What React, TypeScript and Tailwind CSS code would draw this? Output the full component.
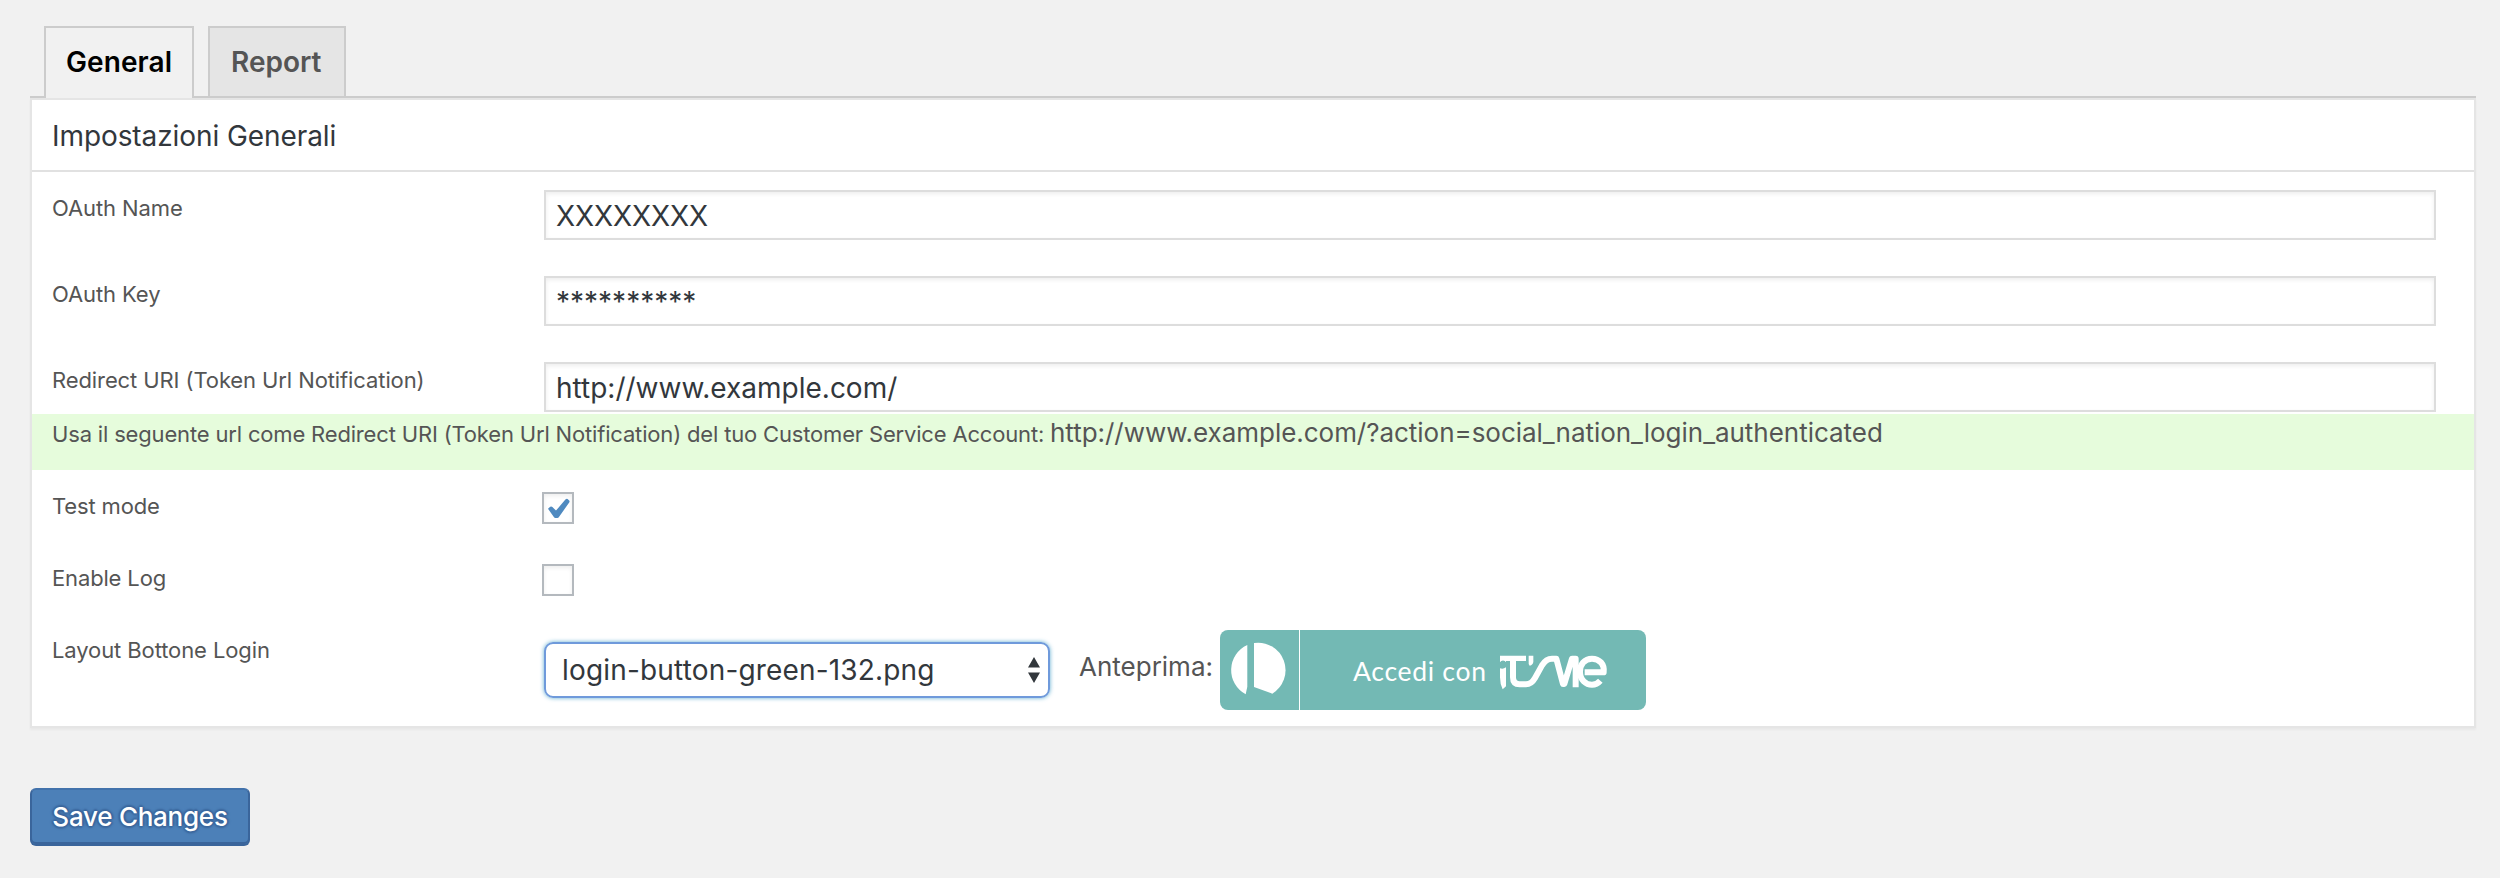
import React from "react";

const INSET = "shadow-[inset_0_2px_4px_rgba(0,0,0,0.07)]";

function Field({ label, value, valueClass }: { label: string; value: string; valueClass: string }) {
  return (
    <div className="flex h-[86px] pt-[18px] pl-[20px]">
      <div className="w-[492px] shrink-0 pt-[3px] text-[22px] leading-[30px]">
        <span className="whitespace-nowrap tracking-[-0.1px]">{label}</span>
      </div>
      <div className={`h-[50px] w-[1892px] border-2 border-[#ddd] bg-white pl-[10px] text-[28px] text-[#32373c] ${INSET}`}>
        <span className={`block whitespace-nowrap leading-[48px] ${valueClass}`}>{value}</span>
      </div>
    </div>
  );
}

function CheckRow({ label, checked }: { label: string; checked?: boolean }) {
  return (
    <div className="flex h-[72px] pt-[20px] pl-[20px]">
      <div className="w-[490px] shrink-0 pt-px text-[22px] leading-[30px]">
        <span className="tracking-[-0.15px]">{label}</span>
      </div>
      <div className={`mt-[2px] h-8 w-8 border-2 border-[#b4b9be] bg-white ${INSET}`}>
        {checked && (
          <svg className="block" width="28" height="28" viewBox="0 0 28 28" fill="#4f8ac0">
            <path d="M4 14.8 6.2 12.8Q7.4 12 8.4 13L12 16.6 21.4 5.6Q22.6 4.4 23.6 5L25.4 6.8Q25.8 7.6 25.2 8.6L14.6 23.4Q12.4 24.8 10.2 23.4Z" />
          </svg>
        )}
      </div>
    </div>
  );
}

function LoginButton() {
  return (
    <div className="mt-[16px] ml-[8px] flex h-[80px] w-[426px] overflow-hidden rounded-[8px] bg-[#73b9b4]">
      <div className="h-[80px] w-[80px] shrink-0 border-r border-white">
        <svg className="block" width="79" height="80" viewBox="0 0 79 80" fill="#fff">
          <path d="M27.3 15V56.7L25.7 64.3A27.5 27.5 0 0 1 27.3 15Z" />
          <path d="M34 13A27.5 27.5 0 0 1 52.3 63.7L34 56.9Z" />
        </svg>
      </div>
      <div className="flex items-start">
        <span className="ml-[53px] mt-[25px] w-[146px] whitespace-nowrap font-[Lato] text-[26.5px] leading-[32px] tracking-[0.7px] text-white">
          Accedi con
        </span>
        <svg className="mt-[24px]" width="110" height="36" viewBox="57 42 330 108" fill="none" stroke="#fff" strokeWidth="18">
          <path d="M60 47H138V63H78V67A10 10 0 0 0 60 67Z" fill="#fff" stroke="none" />
          <path d="M60 85Q69 89 78 82V139L68 148Q60 132 60 112Z" fill="#fff" stroke="none" />
          <path d="M146 47H160V65Q159 74 149 77L146 72Z" fill="#fff" stroke="none" />
          <path d="M99 56V112Q99 133 119 133H138Q154 133 165 114L186 76Q198 56 216 56H229L249 132H253L276 56H287V142" strokeLinejoin="round" />
          <path d="M314 97H371C374 72 358 56 336 56C313 56 300 74 300 95C300 120 318 134 336 134C346 134 354 130 361 122" strokeLinejoin="round" />
        </svg>
      </div>
    </div>
  );
}

export default function App() {
  return (
    <div className="h-[878px] w-[2500px] overflow-hidden bg-[#f1f1f1] pt-[26px] pl-[30px] font-[Inter,sans-serif] text-[#555]">
      <div className="flex h-[72px] w-[2446px] items-start gap-[14px] border-b-2 border-[#ccc] pl-[14px] text-[28px] font-semibold leading-[40px]">
        <div className="h-[72px] w-[150px] border-2 border-b-0 border-[#ccc] bg-[#f1f1f1] pt-[14px] pl-[20px] text-black">
          <span className="tracking-[0.1px]">General</span>
        </div>
        <div className="h-[70px] w-[138px] border-2 border-b-0 border-[#ccc] bg-[#e5e5e5] pt-[14px] pl-[21px]">
          <span>Report</span>
        </div>
      </div>

      <div className="h-[630px] w-[2446px] border-2 border-[#e5e5e5] bg-white shadow-[0_2px_2px_rgba(0,0,0,0.04)]">
        <div className="h-[72px] border-b-2 border-[#e1e1e1] pt-[16px] pl-[20px] text-[28px] leading-[40px] text-[#32373c]">
          <span className="tracking-[-0.08px]">Impostazioni Generali</span>
        </div>
        <Field label="OAuth Name" value="XXXXXXXX" valueClass="tracking-[-0.1px]" />
        <Field label="OAuth Key" value="**********" valueClass="" />
        <div className="h-[70px]">
          <Field label="Redirect URI (Token Url Notification)" value="http://www.example.com/" valueClass="" />
        </div>
        <div className="flex h-[56px] items-baseline bg-[#e6fcdc] pl-[20px] leading-[38px]">
          <span className="w-[993px] shrink-0 whitespace-nowrap text-[22px] tracking-[-0.17px]">
            Usa il seguente url come Redirect URI (Token Url Notification) del tuo Customer Service Account:
          </span>
          <span className="ml-[5px] whitespace-nowrap text-[26px] tracking-[-0.03px]">
            http://www.example.com/?action=social_nation_login_authenticated
          </span>
        </div>
        <CheckRow label="Test mode" checked />
        <CheckRow label="Enable Log" />
        <div className="flex pl-[20px]">
          <div className="w-[492px] shrink-0 pt-[21px] text-[22px] leading-[30px]">
            <span className="tracking-[-0.1px]">Layout Bottone Login</span>
          </div>
          <div className="mt-[28px] flex h-[56px] w-[506px] items-center justify-between rounded-[9px] border-2 border-[#6f9adb] pr-[8px] pl-[16px] text-[#32373c] shadow-[0_0_4px_rgba(30,140,190,0.7)]">
            <span className="text-[28px] tracking-[0.17px]">login-button-green-132.png</span>
            <svg width="12" height="26" viewBox="0 0 12 26" fill="#32373c">
              <path d="M6 0 12 10.5H0ZM0 15.5H12L6 26Z" />
            </svg>
          </div>
          <span className="mt-[33px] ml-[29px] w-[133px] text-[26px] leading-[40px]">Anteprima:</span>
          <LoginButton />
        </div>
      </div>

      <button className="mt-[60px] h-[58px] w-[220px] rounded-[6px] border-2 border-[#3a659b] border-t-[#4272ab] bg-[#4c80b8] text-[26px] font-medium leading-[54px] tracking-[-0.25px] text-white shadow-[inset_0_-2px_0_#3a659b] [text-shadow:0_-2px_2px_#3a659b,2px_0_2px_#3a659b,0_2px_2px_#3a659b,-2px_0_2px_#3a659b]">
        <span>Save Changes</span>
      </button>
    </div>
  );
}
